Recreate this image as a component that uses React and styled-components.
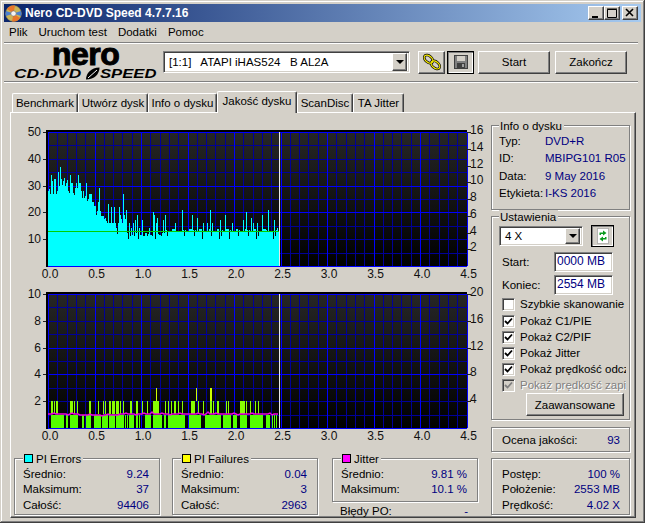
import React from "react";
import styled, { createGlobalStyle } from "styled-components";

const GlobalStyle = createGlobalStyle`
  html, body { margin: 0; padding: 0; background: #d4d0c8; }
  * { box-sizing: border-box; }
`;

// chart geometry (svg starts 11px right of the window edge)
const CHART_W = 478;
const CHART_H = 162;
const PLOT_X = 37;
const PLOT_TOP = 11;
const PLOT_BOTTOM = 145;
const STEP_X = 46.5;
const STEP_Y = 13.4;
const END_X = 269; // 2.5 on the axis
const BRIGHT_ROWS = [0, 4, 6, 10];

// top of each cyan bar, first part of the run, in px from the plot bottom
const HEAD = [
  75, 77, 72, 91, 85, 72, 87, 87, 72, 75, 94, 80, 99, 87, 81, 85, 88, 80, 83, 86, 75, 73, 91, 83, 83, 73, 71,
  78, 83, 78, 91, 83, 83, 75, 68, 75, 68, 70, 83, 65, 67, 72, 72, 72, 64, 64, 60, 60, 51, 55, 64, 78, 55, 50,
  50, 50, 47, 48, 45, 43, 62, 43, 43, 59, 43, 43, 59, 43, 38, 32, 43, 59, 51, 47, 43, 72, 51, 47, 56,
];
const PEAKS = {
  129: 43, 131: 38, 133: 43, 135: 46, 137: 51, 139: 38, 142: 46, 149: 38, 153: 54, 154: 51, 156: 43, 157: 48,
  163: 46, 165: 51, 175: 43, 182: 56, 192: 51, 197: 48, 203: 43, 207: 43, 210: 56, 212: 43, 220: 46, 225: 51,
  232: 43, 243: 46, 246: 54, 251: 48, 253: 43, 257: 43, 262: 51, 268: 56, 274: 46, 277: 38,
};

const barHeight = (x) => {
  const i = x - 48;
  if (i < HEAD.length) return HEAD[i];
  if (PEAKS[x]) return PEAKS[x];
  const n = (x * 37 + (x % 7) * 11) % 13;
  const base = x < 165 ? 33 : 37;
  if (n === 0) return 27;
  if (n === 5) return 30;
  return base - (n % 4);
};

// PI failures, as runs of px from the plot start
const LEVEL_1 = [
  [3, 16], [18, 20], [22, 30], [34, 36], [38, 43], [46, 53], [54, 60], [61, 67], [68, 76], [77, 78], [79, 80],
  [81, 86], [88, 90], [91, 92], [97, 103], [105, 114], [116, 118], [120, 137], [141, 153], [157, 173], [175, 183],
  [185, 189], [192, 199], [202, 215], [218, 222], [224, 225], [226, 227], [228, 229],
];
const LEVEL_2 = [
  [3, 5], [6, 7], [8, 10], [22, 25], [26, 27], [29, 30], [41, 43], [50, 51], [55, 56], [57, 58], [61, 63], [64, 67],
  [68, 71], [72, 73], [75, 76], [82, 84], [88, 90], [94, 95], [99, 100], [105, 111], [117, 118], [120, 121],
  [123, 124], [126, 128], [130, 131], [134, 135], [143, 147], [150, 151], [155, 156], [162, 164], [165, 166],
  [169, 171], [178, 179], [180, 181], [192, 197], [198, 199], [202, 203], [207, 208], [210, 211],
];
const LEVEL_3 = [[108, 109], [148, 149], [162, 164]];

const jitterY = (x) => {
  let y = 240.5;
  if (x > 78 && x < 120) y += 1;
  if ((x * 13) % 9 === 0) y -= 1;
  if ((x * 7) % 17 === 0) y += 1;
  if (x === 152 || x === 153 || x === 208) y -= 2;
  return y;
};

const Page = styled.div`
  width: 645px;
  height: 523px;
  overflow: hidden;
  font: 11.5px "Liberation Sans", Arial, sans-serif;
  color: #000;
`;

const Window = styled.div`
  width: 645px;
  height: 523px;
  padding: 4px;
  display: flex;
  flex-direction: column;
  background: #d4d0c8;
  box-shadow: inset -1px -1px 0 #404040, inset 1px 1px 0 #d4d0c8, inset -2px -2px 0 #808080, inset 2px 2px 0 #fff;
`;

const TitleBar = styled.div`
  height: 18px;
  display: flex;
  align-items: center;
  padding: 0 3px 0 1px;
  background: linear-gradient(90deg, #0a246a, #a6caf0);
`;

const TitleText = styled.span`
  margin-left: 3px;
  flex: 1;
  color: #fff;
  font-weight: bold;
  font-size: 12px;
`;

const raised = `
  border: 1px solid;
  border-color: #fff #404040 #404040 #fff;
  box-shadow: inset -1px -1px 0 #808080;
  background: #d4d0c8;
`;

const sunken = `
  border: 1px solid;
  border-color: #808080 #fff #fff #808080;
  box-shadow: inset 1px 1px 0 #404040, inset -1px -1px 0 #d4d0c8;
  background: #fff;
`;

const CaptionButton = styled.div`
  ${raised}
  width: 16px;
  height: 14px;
  margin-left: ${(p) => p.$gap || 0}px;
  display: flex;
  align-items: center;
  justify-content: center;
`;

const MenuBar = styled.div`
  height: 19px;
  display: flex;
  align-items: center;
  gap: 11px;
  padding-left: 5px;
`;

const Divider = styled.div`
  height: 2px;
  flex: none;
  border-top: 1px solid #808080;
  border-bottom: 1px solid #fff;
  margin: ${(p) => p.$top || 0}px 3px 0 0;
`;

const Toolbar = styled.div`
  height: 37px;
  display: flex;
  align-items: center;
  padding-bottom: 1px;
`;

const Logo = styled.div`
  width: 159px;
  height: 36px;
  padding-left: 10px;
  display: flex;
  flex-direction: column;
`;

const LogoNero = styled.div`
  height: 21px;
  padding-left: 38px;
  font: bold 32px/20px "Liberation Sans", Arial, sans-serif;
  letter-spacing: -0.5px;
  -webkit-text-stroke: 1px #000;
`;

const LogoLine = styled.div`
  display: flex;
  align-items: center;
  height: 13px;
  margin-top: 2px;
`;

const LogoWord = styled.span`
  display: inline-block;
  width: ${(p) => p.$w}px;
  font: italic bold 13px/13px "Liberation Sans", Arial, sans-serif;
  white-space: nowrap;
  transform: scaleX(${(p) => p.$sx});
  transform-origin: left center;
`;

const Combo = styled.div`
  ${sunken}
  display: flex;
  align-items: center;
  justify-content: space-between;
  width: ${(p) => p.$w}px;
  height: ${(p) => p.$h}px;
  padding: 0 2px 0 5px;
  white-space: pre;
  flex: none;
`;

const Arrow = styled.div`
  ${raised}
  width: 15px;
  height: ${(p) => p.$h}px;
  display: flex;
  align-items: center;
  justify-content: center;
  &::after {
    content: "";
    border: 4px solid transparent;
    border-top: 4px solid #000;
    border-bottom: 0;
  }
`;

const Button = styled.div`
  ${raised}
  display: flex;
  align-items: center;
  justify-content: center;
  flex: none;
  width: ${(p) => p.$w}px;
  height: ${(p) => p.$h || 23}px;
  margin-left: ${(p) => p.$left || 0}px;
`;

const PressedButton = styled(Button)`
  border-color: #000;
  box-shadow: inset 1px 1px 0 #808080, inset -1px -1px 0 #fff;
`;

const TabStrip = styled.div`
  display: flex;
  align-items: flex-end;
  height: 21px;
  margin-top: 8px;
  padding-left: 8px;
`;

const Tab = styled.div`
  position: relative;
  z-index: ${(p) => (p.$active ? 1 : 0)};
  width: ${(p) => p.$w}px;
  height: ${(p) => (p.$active ? 22 : 19)}px;
  margin: ${(p) => (p.$active ? "0 0 -1px 0" : "0")};
  padding-bottom: ${(p) => (p.$active ? 3 : 0)}px;
  display: flex;
  align-items: center;
  justify-content: center;
  background: #d4d0c8;
  border: 1px solid;
  border-color: #fff #404040 transparent #fff;
  border-bottom: 0;
  border-radius: 2px 2px 0 0;
  box-shadow: inset -1px 0 0 #808080;
`;

const Panel = styled.div`
  width: 626px;
  height: 406px;
  display: grid;
  grid-template-columns: 480px 139px;
  border: 1px solid;
  border-color: #fff #404040 #404040 #fff;
  box-shadow: inset -1px -1px 0 #808080;
  margin-left: 6px;
`;

const LeftColumn = styled.div`
  padding-top: 8px;
`;

const RightColumn = styled.div`
  padding-top: 6px;
`;

const ChartSvg = styled.svg`
  display: block;
`;

const AxisText = styled.text`
  font: 12px "Liberation Sans", Arial, sans-serif;
  fill: #111;
`;

const StatsRow = styled.div`
  display: flex;
  margin-top: 7px;
  padding-left: 3px;
`;

const Group = styled.fieldset`
  margin: 0;
  min-width: 0;
  border: 1px solid #808080;
  box-shadow: 1px 1px 0 #fff, inset 1px 1px 0 #fff;
`;

const StatGroup = styled(Group)`
  width: 146px;
  height: ${(p) => p.$h}px;
  padding: 1px 10px 0 8px;
`;

const SideGroup = styled(Group)`
  width: 139px;
  height: ${(p) => p.$h}px;
  padding: 0 0 0 7px;
`;

const Legend = styled.legend`
  display: flex;
  align-items: center;
  gap: 3px;
  height: 13px;
  padding: 0 2px 0 1px;
  background: #d4d0c8;
`;

const Swatch = styled.span`
  width: 9px;
  height: 9px;
  border: 1px solid #000;
  background: ${(p) => p.$color};
`;

const Row = styled.div`
  display: flex;
  justify-content: space-between;
  align-items: center;
  height: 15.5px;
`;

const Value = styled.span`
  color: #000080;
`;

const JitterColumn = styled.div`
  width: 146px;
  margin-left: 14px;
`;

const ErrorsRow = styled(Row)`
  padding: 0 10px 0 8px;
  margin-top: 1px;
  height: 15px;
`;

const StatsGap = styled.div`
  width: 12px;
`;

const InfoRow = styled.div`
  display: flex;
  align-items: center;
  height: 17.5px;
`;

const InfoLabel = styled.span`
  width: 46px;
`;

const ControlRow = styled.div`
  display: flex;
  align-items: center;
  height: 22px;
  margin-top: 2px;
`;

const FieldRow = styled.div`
  display: flex;
  align-items: center;
  height: 20px;
  margin-top: ${(p) => p.$top}px;
  padding-left: 3px;
`;

const FieldLabel = styled.span`
  width: 52px;
`;

const Input = styled.div`
  ${sunken}
  width: 59px;
  height: 20px;
  padding: 0 2px;
  line-height: 17px;
  color: #000080;
  font-size: 12px;
`;

const CheckRow = styled.div`
  display: flex;
  align-items: center;
  gap: 5px;
  width: 127px;
  height: 16px;
  margin-top: ${(p) => p.$top || 0}px;
  padding-left: 3px;
  white-space: nowrap;
  overflow: hidden;
  color: ${(p) => (p.$off ? "#808080" : "#000")};
  text-shadow: ${(p) => (p.$off ? "1px 1px 0 #fff" : "none")};
`;

const Box = styled.span`
  ${sunken}
  flex: none;
  width: 13px;
  height: 13px;
  display: flex;
  align-items: center;
  justify-content: center;
  background: ${(p) => (p.$off ? "#d4d0c8" : "#fff")};
`;

const ScoreBox = styled.div`
  width: 139px;
  height: 25px;
  margin-top: 7px;
  padding: 0 9px 0 10px;
  display: flex;
  align-items: center;
  justify-content: space-between;
  border: 1px solid #808080;
  box-shadow: 1px 1px 0 #fff, inset 1px 1px 0 #fff;
`;

const ProgressBox = styled.div`
  width: 139px;
  height: 57px;
  margin-top: 6px;
  padding: 7px 9px 0 10px;
  border: 1px solid #808080;
  box-shadow: 1px 1px 0 #fff, inset 1px 1px 0 #fff;
`;

const CdIcon = () => (
  <svg width="17" height="17" viewBox="0 0 17 17">
    <circle cx="8.5" cy="8.5" r="8" fill="#c9b458" stroke="#6d6a55" strokeWidth="0.6" />
    <path d="M8.5 8.5L2 4a8 8 0 0 1 8-3.4zM8.5 8.5L15 13a8 8 0 0 1-8 3.4z" fill="#e8762a" />
    <path d="M8.5 8.5L16 6a8 8 0 0 1 0 5zM8.5 8.5L1 11a8 8 0 0 1 0-5z" fill="#4a7fd0" />
    <circle cx="8.5" cy="8.5" r="2.6" fill="#f4f4f4" stroke="#777" strokeWidth="0.6" />
  </svg>
);

const LeafIcon = () => (
  <svg width="15" height="13" viewBox="0 0 15 13">
    <path d="M1 12.5C1 6 6 .8 14.5.5 14.5 7 9.5 12.5 1 12.5z" fill="#000" />
    <path d="M3 11L12 3" stroke="#fff" strokeWidth="1" />
  </svg>
);

const ChainIcon = () => (
  <svg width="20" height="20" viewBox="0 0 20 20">
    <g transform="rotate(40 10 10)" fill="none">
      <ellipse cx="5.5" cy="10" rx="5" ry="3.2" stroke="#000" strokeWidth="2.6" />
      <ellipse cx="14.5" cy="10" rx="5" ry="3.2" stroke="#000" strokeWidth="2.6" />
      <ellipse cx="5.5" cy="10" rx="5" ry="3.2" stroke="#f4e800" strokeWidth="1.3" />
      <ellipse cx="14.5" cy="10" rx="5" ry="3.2" stroke="#f4e800" strokeWidth="1.3" />
    </g>
  </svg>
);

const SaveIcon = () => (
  <svg width="14" height="14" viewBox="0 0 14 14" shapeRendering="crispEdges">
    <rect x="0.5" y="0.5" width="13" height="13" fill="#808080" stroke="#404040" />
    <rect x="3" y="1" width="8" height="5" fill="#d4d0c8" />
    <rect x="3" y="8" width="8" height="5" fill="#404040" />
    <rect x="8" y="9" width="2" height="3" fill="#a0a0a0" />
  </svg>
);

const RefreshIcon = () => (
  <svg width="14" height="16" viewBox="0 0 14 16">
    <rect x="1.5" y="0.5" width="11" height="15" fill="#fff" stroke="#808080" strokeDasharray="1 1" />
    <path d="M3.5 7V4.5H7V2.5L10.5 5 7 7.5V6H5V7z" fill="#0a9a1e" />
    <path d="M10.5 9v2.5H7v2L3.5 11 7 8.5V10h2V9z" fill="#0a9a1e" />
  </svg>
);

const Tick = () => (
  <svg width="9" height="9" viewBox="0 0 9 9">
    <path d="M1 4l2.5 2.5L8 1.5" fill="none" stroke="currentColor" strokeWidth="1.8" />
  </svg>
);

const Chart = ({ left, right, children }) => {
  const rows = Array.from({ length: 11 }, (_, i) => Math.round(PLOT_TOP + i * STEP_Y) + 0.5);
  const columns = Array.from({ length: 46 }, (_, i) => Math.round(PLOT_X + (i * STEP_X) / 5) + 0.5);
  const minorV = columns.filter((_, i) => i % 5).map((x) => `M${x} ${PLOT_TOP}V${PLOT_BOTTOM}`).join("");
  const majorV = columns.filter((_, i) => i % 5 === 0).map((x) => `M${x} ${PLOT_TOP}V${PLOT_BOTTOM}`).join("");
  const minorH = rows.filter((_, i) => !BRIGHT_ROWS.includes(i)).map((y) => `M${PLOT_X} ${y}H456`).join("");
  const majorH = rows.filter((_, i) => BRIGHT_ROWS.includes(i)).map((y) => `M${PLOT_X} ${y}H456`).join("");
  return (
    <ChartSvg width={CHART_W} height={CHART_H} viewBox={`0 0 ${CHART_W} ${CHART_H}`}>
      <defs>
        <linearGradient id="plotFade" x1="0" y1="0" x2="0" y2="1">
          <stop offset="0" stopColor="#262626" />
          <stop offset="1" stopColor="#000" />
        </linearGradient>
      </defs>
      <rect x={PLOT_X - 2} y={PLOT_TOP - 2} width={421} height={PLOT_BOTTOM - PLOT_TOP + 3} fill="#000" />
      <rect x={PLOT_X} y={PLOT_TOP} width={419} height={PLOT_BOTTOM - PLOT_TOP} fill="url(#plotFade)" />
      <g shapeRendering="crispEdges" fill="none">
        <path d={minorV + minorH} stroke="#000098" />
        <path d={majorV + majorH} stroke="#0000ff" />
        {children}
        <path d={`M${END_X - 1 + 0.5} ${PLOT_TOP}V${PLOT_BOTTOM}`} stroke="#e8e8e8" />
        {left.map((v, i) => (
          <path key={v} d={`M${PLOT_X - 5} ${Math.round(PLOT_TOP + i * 26.8) + 0.5}h3`} stroke="#222" />
        ))}
        {right.map((v, i) => (
          <path
            key={v}
            d={`M456 ${Math.round(PLOT_TOP + (i * 134) / right.length) + 0.5}h4`}
            stroke="#222"
          />
        ))}
      </g>
      {left.map((v, i) => (
        <AxisText key={v} x={PLOT_X - 7} y={Math.round(PLOT_TOP + i * 26.8) + 4} textAnchor="end">
          {v}
        </AxisText>
      ))}
      {right.map((v, i) => (
        <AxisText key={v} x="459" y={Math.round(PLOT_TOP + (i * 134) / right.length) + 2} >
          {v}
        </AxisText>
      ))}
      {["0.0", "0.5", "1.0", "1.5", "2.0", "2.5", "3.0", "3.5", "4.0", "4.5"].map((v, i) => (
        <AxisText key={v} x={PLOT_X + 2 + i * STEP_X} y="157" textAnchor="middle">
          {v}
        </AxisText>
      ))}
    </ChartSvg>
  );
};

const ErrorsBars = () => {
  let d = "";
  for (let x = 48; x < 279; x++) {
    d += `M${x - 11 + 0.5} ${PLOT_BOTTOM - barHeight(x)}V${PLOT_BOTTOM}`;
  }
  return (
    <>
      <path d={d} stroke="#00ffff" />
      <path d={`M${PLOT_X} 110.5H${END_X - 1}`} stroke="#00d000" />
    </>
  );
};

const FailureBand = ({ runs, level, color }) => {
  const top = PLOT_BOTTOM - level * STEP_Y;
  const d = runs.map(([a, b]) => `M${PLOT_X + a} ${Math.round(top)}h${b - a}v${Math.round(STEP_Y)}h${a - b}z`).join("");
  return <path d={d} fill={color} stroke="none" />;
};

const FailureBars = () => {
  const points = [];
  for (let x = 48; x < 279; x += 2) points.push(`${x - 11},${jitterY(x) - 162 + 52.5}`);
  return (
    <>
      <FailureBand runs={LEVEL_1} level={1} color="#55ff00" />
      <FailureBand runs={LEVEL_2} level={2} color="#88ff00" />
      <FailureBand runs={LEVEL_3} level={3} color="#ccff00" />
      <polyline points={points.join(" ")} stroke="#f000e0" strokeWidth="1.4" shapeRendering="auto" />
    </>
  );
};

const Check = ({ children, off, top }) => (
  <CheckRow $off={off} $top={top}>
    <Box $off={off}>{children === "Szybkie skanowanie" ? null : <Tick />}</Box>
    {children}
  </CheckRow>
);

const Stat = ({ label, value }) => (
  <Row>
    <span>{label}</span>
    <Value>{value}</Value>
  </Row>
);

const TABS = [
  ["Benchmark", 66],
  ["Utwórz dysk", 70],
  ["Info o dysku", 69],
  ["Jakość dysku", 80, true],
  ["ScanDisc", 56],
  ["TA Jitter", 51],
];

const App = () => (
  <Page>
    <GlobalStyle />
    <Window>
      <TitleBar>
        <CdIcon />
        <TitleText>Nero CD-DVD Speed 4.7.7.16</TitleText>
        <CaptionButton>
          <svg width="10" height="10"><rect x="1" y="8" width="6" height="2" /></svg>
        </CaptionButton>
        <CaptionButton>
          <svg width="10" height="10"><path d="M.5 1.5h9v8h-9zM0 1h10" fill="none" stroke="#000" /></svg>
        </CaptionButton>
        <CaptionButton $gap={2}>
          <svg width="10" height="10"><path d="M1 1l7 7M8 1L1 8" stroke="#000" strokeWidth="1.6" /></svg>
        </CaptionButton>
      </TitleBar>
      <MenuBar>
        <span>Plik</span>
        <span>Uruchom test</span>
        <span>Dodatki</span>
        <span>Pomoc</span>
      </MenuBar>
      <Divider $top={1} />
      <Toolbar>
        <Logo>
          <LogoNero>nero</LogoNero>
          <LogoLine>
            <LogoWord $w={71} $sx={1.33}>CD·DVD</LogoWord>
            <LeafIcon />
            <LogoWord $w={60} $sx={1.28}>SPEED</LogoWord>
          </LogoLine>
        </Logo>
        <Combo $w={247} $h={22}>
          {"[1:1]   ATAPI iHAS524   B AL2A"}
          <Arrow $h={18} />
        </Combo>
        <Button $w={27} $left={8}><ChainIcon /></Button>
        <PressedButton $w={27} $left={2}><SaveIcon /></PressedButton>
        <Button $w={72} $left={4}>Start</Button>
        <Button $w={72} $left={5}>Zakończ</Button>
      </Toolbar>
      <Divider />
      <TabStrip>
        {TABS.map(([name, w, active]) => (
          <Tab key={name} $w={w} $active={active}>{name}</Tab>
        ))}
      </TabStrip>
      <Panel>
        <LeftColumn>
          <Chart left={[50, 40, 30, 20, 10]} right={[16, 14, 12, 10, 8, 6, 4, 2]}>
            <ErrorsBars />
          </Chart>
          <Chart left={[10, 8, 6, 4, 2]} right={[20, 16, 12, 8, 4]}>
            <FailureBars />
          </Chart>
          <StatsRow>
            <StatGroup $h={63}>
              <Legend><Swatch $color="#00ffff" />PI Errors</Legend>
              <Stat label="Średnio:" value="9.24" />
              <Stat label="Maksimum:" value="37" />
              <Stat label="Całość:" value="94406" />
            </StatGroup>
            <StatsGap />
            <StatGroup $h={63}>
              <Legend><Swatch $color="#ffff00" />PI Failures</Legend>
              <Stat label="Średnio:" value="0.04" />
              <Stat label="Maksimum:" value="3" />
              <Stat label="Całość:" value="2963" />
            </StatGroup>
            <JitterColumn>
              <StatGroup $h={50}>
                <Legend><Swatch $color="#ff00ff" />Jitter</Legend>
                <Stat label="Średnio:" value="9.81 %" />
                <Stat label="Maksimum:" value="10.1 %" />
              </StatGroup>
              <ErrorsRow>
                <span>Błędy PO:</span>
                <Value>-</Value>
              </ErrorsRow>
            </JitterColumn>
          </StatsRow>
        </LeftColumn>
        <RightColumn>
          <SideGroup $h={91}>
            <Legend>Info o dysku</Legend>
            <InfoRow><InfoLabel>Typ:</InfoLabel><Value>DVD+R</Value></InfoRow>
            <InfoRow><InfoLabel>ID:</InfoLabel><Value>MBIPG101 R05</Value></InfoRow>
            <InfoRow><InfoLabel>Data:</InfoLabel><Value>9 May 2016</Value></InfoRow>
            <InfoRow><InfoLabel>Etykieta:</InfoLabel><Value>I-KS 2016</Value></InfoRow>
          </SideGroup>
          <SideGroup $h={210}>
            <Legend>Ustawienia</Legend>
            <ControlRow>
              <Combo $w={84} $h={20}>
                4 X
                <Arrow $h={16} />
              </Combo>
              <PressedButton $w={23} $h={22} $left={8}><RefreshIcon /></PressedButton>
            </ControlRow>
            <FieldRow $top={5}><FieldLabel>Start:</FieldLabel><Input>0000 MB</Input></FieldRow>
            <FieldRow $top={3}><FieldLabel>Koniec:</FieldLabel><Input>2554 MB</Input></FieldRow>
            <Check top={1}>Szybkie skanowanie</Check>
            <Check top={1}>Pokaż C1/PIE</Check>
            <Check>Pokaż C2/PIF</Check>
            <Check>Pokaż Jitter</Check>
            <Check>Pokaż prędkość odczytu</Check>
            <Check off>Pokaż prędkość zapisu</Check>
            <Button $w={98} $h={23} $left={27}>Zaawansowane</Button>
          </SideGroup>
          <ScoreBox>
            <span>Ocena jakości:</span>
            <Value>93</Value>
          </ScoreBox>
          <ProgressBox>
            <Stat label="Postęp:" value="100 %" />
            <Stat label="Położenie:" value="2553 MB" />
            <Stat label="Prędkość:" value="4.02 X" />
          </ProgressBox>
        </RightColumn>
      </Panel>
    </Window>
  </Page>
);

export default App;
